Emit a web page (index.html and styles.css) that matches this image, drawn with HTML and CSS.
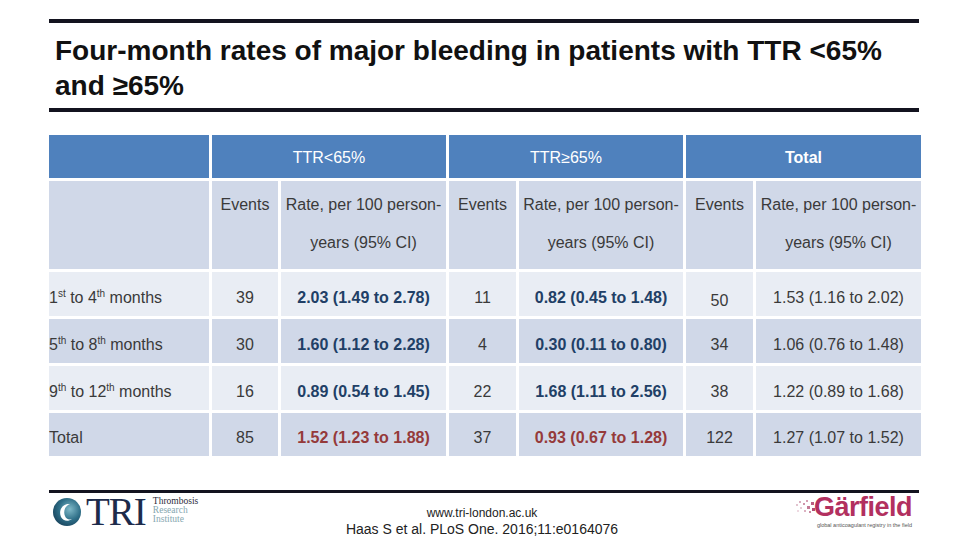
FILE: index.html
```html
<!DOCTYPE html>
<html>
<head>
<meta charset="utf-8">
<link rel="stylesheet" href="styles.css">
</head>
<body>
<div class="slide">
  <div class="rule rule-top"></div>
  <h1 class="title">Four-month rates of major bleeding in patients with TTR &lt;65%<br>and ≥65%</h1>
  <div class="rule"></div>

  <div class="tbl">
    <div class="c hd"></div>
    <div class="c hd span2">TTR&lt;65%</div>
    <div class="c hd span2">TTR≥65%</div>
    <div class="c hd span2 bold">Total</div>

    <div class="c sub"></div>
    <div class="c sub">Events</div>
    <div class="c sub">Rate, per 100 person-<br>years (95% CI)</div>
    <div class="c sub">Events</div>
    <div class="c sub">Rate, per 100 person-<br>years (95% CI)</div>
    <div class="c sub">Events</div>
    <div class="c sub">Rate, per 100 person-<br>years (95% CI)</div>

    <div class="c lt lbl"><span>1<sup class="sp">st</sup> to 4<sup class="sp">th</sup> months</span></div>
    <div class="c lt">39</div>
    <div class="c lt rate">2.03 (1.49 to 2.78)</div>
    <div class="c lt">11</div>
    <div class="c lt rate">0.82 (0.45 to 1.48)</div>
    <div class="c lt low">50</div>
    <div class="c lt">1.53 (1.16 to 2.02)</div>

    <div class="c dk lbl"><span>5<sup class="sp">th</sup> to 8<sup class="sp">th</sup> months</span></div>
    <div class="c dk">30</div>
    <div class="c dk rate">1.60 (1.12 to 2.28)</div>
    <div class="c dk">4</div>
    <div class="c dk rate">0.30 (0.11 to 0.80)</div>
    <div class="c dk">34</div>
    <div class="c dk">1.06 (0.76 to 1.48)</div>

    <div class="c lt lbl"><span>9<sup class="sp">th</sup> to 12<sup class="sp">th</sup> months</span></div>
    <div class="c lt">16</div>
    <div class="c lt rate">0.89 (0.54 to 1.45)</div>
    <div class="c lt">22</div>
    <div class="c lt rate">1.68 (1.11 to 2.56)</div>
    <div class="c lt">38</div>
    <div class="c lt">1.22 (0.89 to 1.68)</div>

    <div class="c dk lbl">Total</div>
    <div class="c dk">85</div>
    <div class="c dk rate red">1.52 (1.23 to 1.88)</div>
    <div class="c dk">37</div>
    <div class="c dk rate red">0.93 (0.67 to 1.28)</div>
    <div class="c dk">122</div>
    <div class="c dk">1.27 (1.07 to 1.52)</div>
  </div>

  <div class="rule rule-bottom"></div>

  <div class="footer">
    <div class="tri">
      <svg class="tri-mark" width="30" height="30" viewBox="0 0 30 30">
        <defs>
          <radialGradient id="g1" cx="0.6" cy="0.4" r="0.7">
            <stop offset="0" stop-color="#7fb9c8"/>
            <stop offset="0.55" stop-color="#2f6f88"/>
            <stop offset="1" stop-color="#163f58"/>
          </radialGradient>
        </defs>
        <circle cx="15" cy="15" r="14" fill="url(#g1)"/>
        <path d="M9 20 C6 13 11 6 18 7 C13 9 11 14 13 19 C14 22 17 23 20 22 C16 25 11 24 9 20 Z" fill="#ffffff"/>
      </svg>
      <span class="tri-word">TRI</span>
      <div class="tri-sub">
        <span class="t1">Thrombosis</span>
        <span class="t2">Research</span>
        <span class="t2">Institute</span>
      </div>
    </div>
    <div class="cite">
      <div class="url">www.tri-london.ac.uk</div>
      <div class="ref">Haas S et al. PLoS One. 2016;11:e0164076</div>
    </div>
    <div class="garfield">
      <div class="g-row">
        <svg class="dust" width="20" height="18" viewBox="0 0 20 18">
          <rect x="1" y="6" width="2" height="2" fill="#e2c4cf"/>
          <rect x="4" y="3" width="2" height="2" fill="#d9aebf"/>
          <rect x="5" y="9" width="2" height="2" fill="#e6cbd5"/>
          <rect x="8" y="5" width="2" height="2" fill="#cf93aa"/>
          <rect x="9" y="12" width="2" height="2" fill="#dcb1c1"/>
          <rect x="11" y="2" width="2" height="2" fill="#d59fb3"/>
          <rect x="12" y="8" width="3" height="3" fill="#c47a96"/>
          <rect x="14" y="13" width="2" height="2" fill="#c98aa2"/>
          <rect x="16" y="4" width="3" height="3" fill="#bb5f82"/>
          <rect x="17" y="10" width="3" height="3" fill="#b44a73"/>
          <rect x="2" y="12" width="2" height="2" fill="#eed9e1"/>
        </svg>
        <span class="g-word">Gärfield</span>
      </div>
      <div class="g-sub">global anticoagulant registry in the field</div>
    </div>
  </div>
</div>
</body>
</html>
```

FILE: styles.css
```css
html, body {
  margin: 0;
  padding: 0;
  background: #ffffff;
}

body {
  font-family: "Liberation Sans", Arial, sans-serif;
}

.slide {
  width: 960px;
  height: 540px;
  overflow: hidden;
}

.rule {
  height: 4px;
  width: 870px;
  margin-left: 49px;
  background: #13131f;
}

.rule-top {
  margin-top: 19px;
}

.title {
  margin: 0 0 0 49px;
  padding: 10px 0 5px 6px;
  font-size: 28px;
  line-height: 35px;
  font-weight: bold;
  color: #111111;
}

.tbl {
  display: grid;
  grid-template-columns: 160px 66px 165px 67px 164px 67px 165px;
  grid-template-rows: 43px 88px 44px 44px 44px 43px;
  gap: 3px;
  margin: 23px 0 0 49px;
}

.c {
  display: flex;
  align-items: center;
  justify-content: center;
  text-align: center;
  font-size: 16px;
  color: #3a3a3a;
  white-space: nowrap;
  padding-top: 7px;
  box-sizing: border-box;
}

.hd {
  background: #4f81bd;
  color: #ffffff;
  padding-top: 3px;
}

.span2 {
  grid-column: span 2;
}

.bold {
  font-weight: bold;
}

.sub {
  background: #d0d8e8;
  align-items: flex-start;
  line-height: 38px;
  padding-top: 5px;
}

.lt {
  background: #e9edf4;
}

.dk {
  background: #d0d8e8;
}

.lbl {
  justify-content: flex-start;
}

.sp {
  font-size: 10px;
  line-height: 0;
  vertical-align: 6px;
}

.rate {
  font-weight: bold;
  color: #213f66;
}

.red {
  color: #953a3a;
}

.low {
  padding-top: 13px;
}

.rule-bottom {
  margin-top: 34px;
  height: 3px;
}

.footer {
  display: grid;
  grid-template-columns: 1fr auto 1fr;
  align-items: start;
  padding: 0 48px 0 52px;
  height: 47px;
}

.tri {
  display: flex;
  align-items: center;
  padding-top: 4px;
}

.tri-mark {
  display: block;
}

.tri-word {
  font-family: "Liberation Serif", "Times New Roman", serif;
  font-size: 39px;
  line-height: 30px;
  color: #1d2b4b;
  margin-left: 4px;
  letter-spacing: -1px;
}

.tri-sub {
  display: flex;
  flex-direction: column;
  margin-left: 7px;
  font-family: "Liberation Serif", "Times New Roman", serif;
  font-size: 9.5px;
  line-height: 9px;
  margin-top: -4px;
}

.t1 {
  color: #2b2b3a;
}

.t2 {
  color: #86a7b0;
}

.cite {
  text-align: center;
  padding-top: 13px;
  color: #222222;
}

.url {
  font-size: 12px;
  line-height: 14px;
}

.ref {
  font-size: 14px;
  line-height: 18px;
}

.garfield {
  justify-self: end;
  padding-top: 2px;
  display: flex;
  flex-direction: column;
  align-items: flex-end;
}

.g-row {
  display: flex;
  align-items: center;
  height: 24px;
}

.dust {
  display: block;
  margin-right: -1px;
}

.g-word {
  font-size: 27px;
  line-height: 24px;
  font-weight: bold;
  color: #b2305f;
  letter-spacing: -0.5px;
}

.g-sub {
  margin-top: 3px;
  font-size: 5.5px;
  line-height: 7px;
  color: #555555;
  white-space: nowrap;
}
```
